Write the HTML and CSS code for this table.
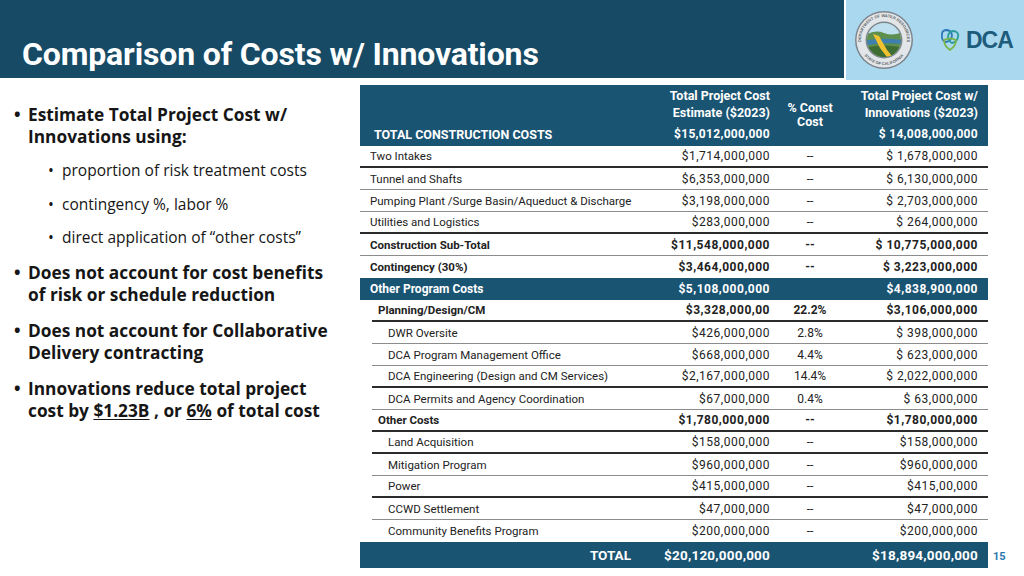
FILE: index.html
```html
<!DOCTYPE html>
<html>
<head>
<meta charset="utf-8">
<link rel="stylesheet" href="styles.css">
</head>
<body>
<div class="slide">
  <header class="top">
    <div class="titlebar"><h1>Comparison of Costs w/ Innovations</h1></div>
    <div class="logos">
      <svg class="seal" width="60" height="60" viewBox="0 0 60 60">
        <defs>
          <path id="arcTop" d="M8.38,37.87 A23,23 0 1,1 51.62,37.87"/>
          <path id="arcBot" d="M6.5,38.55 A25,25 0 0,0 53.5,38.55"/>
          <clipPath id="inner"><circle cx="30" cy="30" r="17"/></clipPath>
        </defs>
        <circle cx="30" cy="30" r="29" fill="#7d858c"/>
        <circle cx="30" cy="30" r="27.5" fill="#e3e6e8"/>
        <circle cx="30" cy="30" r="18.5" fill="#7d858c"/>
        <text class="sealtxt"><textPath href="#arcTop" startOffset="50%" text-anchor="middle">DEPARTMENT OF WATER RESOURCES</textPath></text>
        <text class="sealtxt"><textPath href="#arcBot" startOffset="50%" text-anchor="middle">STATE OF CALIFORNIA</textPath></text>
        <g clip-path="url(#inner)">
          <rect x="10" y="10" width="40" height="40" fill="#bfe0ee"/>
          <path d="M10,26 Q20,19 30,23 T50,21 L50,50 L10,50 Z" fill="#5f8f4e"/>
          <path d="M10,31 Q24,27 50,30 L50,34 Q26,32 10,36 Z" fill="#3d7fae"/>
          <path d="M10,38 Q30,33 50,38 L50,50 L10,50 Z" fill="#3f6e35"/>
          <path d="M19,24 L25,26 L33,40 L38,46 L33,47 L26,38 Z" fill="#f2c230"/>
        </g>
      </svg>
      <div class="dca">
        <svg width="24" height="24" viewBox="0 0 24 24" class="knot">
          <path d="M4,6 Q4,2 9,2 Q14,3 14,8 Q13,13 8,14 Q3,13 4,6 Z" fill="none" stroke="#2f78b8" stroke-width="1.8"/>
          <path d="M10,8 Q11,3 16,3 Q21,4 20,9 Q19,14 14,15 Q10,13 10,8 Z" fill="none" stroke="#2a9c9c" stroke-width="1.8"/>
          <path d="M6,12 Q12,9 18,12 Q18,18 12,22 Q6,18 6,12 Z" fill="none" stroke="#7ab648" stroke-width="1.8"/>
        </svg>
        <span class="dcatxt">DCA</span>
      </div>
    </div>
  </header>

  <main class="content">
    <ul class="bullets">
      <li class="main">
        <span class="dot">•</span>
        <div class="txt">Estimate Total Project Cost w/ Innovations using:
          <ul class="sub">
            <li><span class="dot">•</span><span>proportion of risk treatment costs</span></li>
            <li><span class="dot">•</span><span>contingency %, labor %</span></li>
            <li><span class="dot">•</span><span>direct application of “other costs”</span></li>
          </ul>
        </div>
      </li>
      <li class="main"><span class="dot">•</span><div class="txt">Does not account for cost benefits of risk or schedule reduction</div></li>
      <li class="main"><span class="dot">•</span><div class="txt">Does not account for Collaborative Delivery contracting</div></li>
      <li class="main"><span class="dot">•</span><div class="txt"><span class="line">Innovations reduce total project</span><span class="line">cost by <u>$1.23B</u> , or <u>6%</u> of total cost</span></div></li>
    </ul>

    <div class="tablewrap">
      <div class="table">
        <div class="row head">
          <div class="c1">TOTAL CONSTRUCTION COSTS</div>
          <div class="c2"><span>Total Project Cost<br>Estimate ($2023)</span><span class="hv">$15,012,000,000</span></div>
          <div class="c3">% Const<br>Cost</div>
          <div class="c4"><span>Total Project Cost w/<br>Innovations ($2023)</span><span class="hv">$ 14,008,000,000</span></div>
        </div>

        <div class="row a thick"><div class="c1">Two Intakes</div><div class="c2">$1,714,000,000</div><div class="c3">--</div><div class="c4">$ 1,678,000,000</div></div>
        <div class="row a thin"><div class="c1">Tunnel and Shafts</div><div class="c2">$6,353,000,000</div><div class="c3">--</div><div class="c4">$ 6,130,000,000</div></div>
        <div class="row a thin"><div class="c1">Pumping Plant /Surge Basin/Aqueduct &amp; Discharge</div><div class="c2">$3,198,000,000</div><div class="c3">--</div><div class="c4">$ 2,703,000,000</div></div>
        <div class="row a thick"><div class="c1">Utilities and Logistics</div><div class="c2">$283,000,000</div><div class="c3">--</div><div class="c4">$ 264,000,000</div></div>
        <div class="row a thin b"><div class="c1">Construction Sub-Total</div><div class="c2">$11,548,000,000</div><div class="c3">--</div><div class="c4">$ 10,775,000,000</div></div>
        <div class="row a none b"><div class="c1">Contingency (30%)</div><div class="c2">$3,464,000,000</div><div class="c3">--</div><div class="c4">$ 3,223,000,000</div></div>

        <div class="row band"><div class="c1">Other Program Costs</div><div class="c2">$5,108,000,000</div><div class="c3"></div><div class="c4">$4,838,900,000</div></div>

        <div class="row s thick b l1"><div class="c1">Planning/Design/CM</div><div class="c2">$3,328,000,00</div><div class="c3">22.2%</div><div class="c4">$3,106,000,000</div></div>
        <div class="row s thin l2"><div class="c1">DWR Oversite</div><div class="c2">$426,000,000</div><div class="c3">2.8%</div><div class="c4">$ 398,000,000</div></div>
        <div class="row s thin l2"><div class="c1">DCA Program Management Office</div><div class="c2">$668,000,000</div><div class="c3">4.4%</div><div class="c4">$ 623,000,000</div></div>
        <div class="row s thick l2"><div class="c1">DCA Engineering (Design and CM Services)</div><div class="c2">$2,167,000,000</div><div class="c3">14.4%</div><div class="c4">$ 2,022,000,000</div></div>
        <div class="row s thin l2"><div class="c1">DCA Permits and Agency Coordination</div><div class="c2">$67,000,000</div><div class="c3">0.4%</div><div class="c4">$ 63,000,000</div></div>
        <div class="row s thick b l1"><div class="c1">Other Costs</div><div class="c2">$1,780,000,000</div><div class="c3">--</div><div class="c4">$1,780,000,000</div></div>
        <div class="row s thick l2"><div class="c1">Land Acquisition</div><div class="c2">$158,000,000</div><div class="c3">--</div><div class="c4">$158,000,000</div></div>
        <div class="row s thin l2"><div class="c1">Mitigation Program</div><div class="c2">$960,000,000</div><div class="c3">--</div><div class="c4">$960,000,000</div></div>
        <div class="row s thick l2"><div class="c1">Power</div><div class="c2">$415,000,000</div><div class="c3">--</div><div class="c4">$415,00,000</div></div>
        <div class="row s thin l2"><div class="c1">CCWD Settlement</div><div class="c2">$47,000,000</div><div class="c3">--</div><div class="c4">$47,000,000</div></div>
        <div class="row s none l2"><div class="c1">Community Benefits Program</div><div class="c2">$200,000,000</div><div class="c3">--</div><div class="c4">$200,000,000</div></div>

        <div class="row total"><div class="c1">TOTAL</div><div class="c2">$20,120,000,000</div><div class="c3"></div><div class="c4">$18,894,000,000</div></div>
      </div>
      <div class="pagenum">15</div>
    </div>
  </main>
</div>
</body>
</html>
```

FILE: styles.css
```css
* { box-sizing: border-box; }
body { margin: 0; background: #ffffff; font-family: "Roboto", "Liberation Sans", sans-serif; }
.slide { width: 1024px; height: 576px; overflow: hidden; background: #fff; }

.top { display: flex; height: 80px; gap: 2px; }
.titlebar {
  flex: 1; height: 78px; background: #164a65;
  display: flex; align-items: flex-end; padding: 0 0 5px 22px;
}
.titlebar h1 {
  margin: 0; color: #fff; font-family: "Roboto", sans-serif; font-weight: 700;
  font-size: 32px; line-height: 38px; letter-spacing: -0.15px;
}
.logos {
  width: 178px; height: 80px; background: #a9d8ef;
  display: flex; align-items: center; padding-left: 8px; gap: 24px;
}
.seal { display: block; }
.sealtxt { font-family: "Liberation Sans", sans-serif; font-size: 4px; font-weight: 700; fill: #5c6369; }
.dca { display: flex; align-items: center; gap: 4px; }
.knot { display: block; }
.dcatxt { font-family: "Liberation Sans", sans-serif; font-size: 23px; font-weight: 700; color: #1e5c7c; letter-spacing: -1px; }

.content { display: flex; padding-top: 5px; }

.bullets {
  list-style: none; margin: 0; padding: 19px 0 0 14px; width: 360px; flex: none;
  color: #161616; font-family: "Open Sans", sans-serif;
}
.bullets li.main {
  display: flex; font-weight: 700; font-size: 17.3px; line-height: 22px; margin-bottom: 14px;
}
.bullets .txt { width: 312px; }
.bullets .line { display: block; }
.bullets .dot { width: 14px; flex: none; }
.sub { list-style: none; margin: 11px 0 0 0; padding: 0 0 0 20px; }
.sub li {
  display: flex; font-weight: 400; font-size: 15.5px; line-height: 22px; margin-bottom: 11.5px;
}
.sub li:last-child { margin-bottom: 0; }
.sub li .dot { width: 14px; }
.bullets u { text-underline-offset: 2px; }

.tablewrap { display: flex; align-items: flex-end; }
.table { width: 628px; font-size: 11.5px; color: #222; flex: none; }
.row {
  display: grid; grid-template-columns: 1fr 127px 76px 130px;
  height: 22px; align-items: center; padding-right: 10px;
}
.row .c2 { text-align: right; padding-right: 2px; }
.row .c3 { text-align: center; font-size: 12px; }
.row .c4 { text-align: right; }
.row .c2, .row .c4 { font-size: 12px; letter-spacing: 0.5px; }
.row .c1 { white-space: nowrap; }

.row.a { padding-left: 10px; }
.row.s { margin-left: 12px; padding-left: 6px; }
.row.s.l2 { padding-left: 16px; }
.row.thick { border-bottom: 2px solid #2b2b2b; }
.row.thin { border-bottom: 1px solid #8c8c8c; }
.row.b { font-weight: 700; }

.head {
  height: 61px; background: #1a5473; color: #fff; font-weight: 700;
  align-items: end; padding: 0 10px 3px 14px; font-size: 12.5px;
}
.head .c1 { line-height: 17px; }
.head .c2, .head .c4 { display: flex; flex-direction: column; align-items: flex-end; line-height: 17px; font-size: 12.5px; letter-spacing: 0; }
.head .hv { margin-top: 5px; font-size: 12px; letter-spacing: 0.3px; }
.head .c3 { align-self: center; line-height: 14px; padding-top: 2px; font-size: 12.5px; }

.band {
  background: #1a5473; color: #fff; font-weight: 700; font-size: 12px; padding-left: 10px;
}
.total {
  height: 26px; background: #1a5473; color: #fff; font-weight: 700; font-size: 13.5px;
}
.total .c2, .total .c4 { font-size: 13.5px; letter-spacing: 0.2px; }
.total .c1 { text-align: right; padding-right: 14px; }

.pagenum {
  margin: 0 0 5px 5px; font-size: 11px; font-weight: 700; color: #2978ad;
}
```
